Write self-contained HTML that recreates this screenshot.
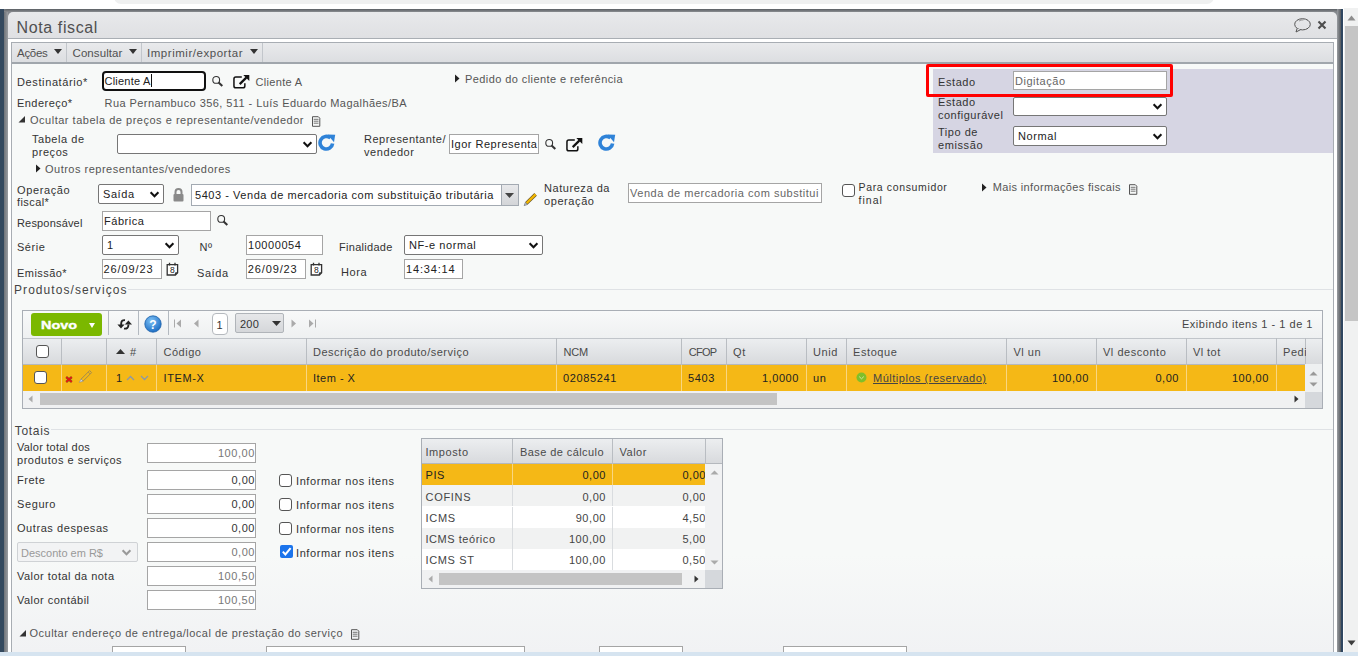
<!DOCTYPE html>
<html><head><meta charset="utf-8"><style>
html,body{margin:0;padding:0;}
body{width:1358px;height:656px;overflow:hidden;position:relative;background:#fff;font-family:"Liberation Sans", sans-serif;}
body>div{position:absolute;box-sizing:border-box;}
.t{white-space:pre;line-height:1;}
</style></head><body>
<div style="left:114px;top:-10px;width:1100px;height:14px;background:#eff0f0;border-radius:10px;"></div>
<div style="left:0px;top:9px;width:4px;height:643px;background:#34495e;"></div>
<div style="left:4px;top:9px;width:4px;height:643px;background:linear-gradient(90deg,#6f7378,#9a9da1);"></div>
<div style="left:4px;top:9px;width:1339px;height:3px;background:linear-gradient(#5a5e63,#8a8d91);border-radius:6px 6px 0 0;"></div>
<div style="left:1337px;top:9px;width:4px;height:643px;background:linear-gradient(90deg,#9a9da1,#55595e);"></div>
<div style="left:1341px;top:9px;width:2px;height:643px;background:#2f4660;"></div>
<div style="left:8px;top:12px;width:1329px;height:640px;background:#fff;"></div>
<div style="left:8px;top:12px;width:1329px;height:8px;background:#85898e;"></div>
<div style="left:8px;top:12px;width:1329px;height:27px;background:linear-gradient(#e8e9eb,#dfe0e3);border-bottom:1px solid #a9aeb4;border-radius:5px 5px 0 0;"></div>
<div class="t" style="left:16.5px;top:20.00px;font-size:16px;color:#505050;letter-spacing:0.618px;">Nota fiscal</div>
<svg style="position:absolute;left:1293px;top:17px;" width="20" height="16" viewBox="0 0 20 16"><ellipse cx="9.5" cy="7.3" rx="7.8" ry="5.6" fill="none" stroke="#555" stroke-width="1"/><path d="M4.2 11.2 L3 15 L7.5 12.7" fill="#e2e3e6" stroke="#555" stroke-width="1"/><path d="M6 4 Q8 2.8 10.5 2.9" stroke="#888" stroke-width="0.8" fill="none"/></svg>
<svg style="position:absolute;left:1317px;top:20px;" width="10" height="10" viewBox="0 0 10 10"><path d="M1.5 1.5 L8.5 8.5 M8.5 1.5 L1.5 8.5" stroke="#4d4d4d" stroke-width="2.1"/></svg>
<div style="left:1344px;top:8px;width:14px;height:644px;background:#f0f1f1;"></div>
<svg style="position:absolute;left:1347px;top:15px;" width="9" height="6" viewBox="0 0 9 6"><path d="M0.5 5.5 L4.5 0.5 L8.5 5.5Z" fill="#8d8d8d"/></svg>
<div style="left:1345px;top:26px;width:13px;height:295px;background:#c5c5c5;"></div>
<svg style="position:absolute;left:1347px;top:640px;" width="9" height="6" viewBox="0 0 9 6"><path d="M0.5 0.5 L4.5 5.5 L8.5 0.5Z" fill="#3d3d3d"/></svg>
<div style="left:0px;top:652px;width:1358px;height:4px;background:#d6e4f0;"></div>
<div style="left:11px;top:42px;width:1323px;height:610px;background:linear-gradient(#f7f9f8 0%,#f7f9f8 84%,#f1f2f4 100%);border:1px solid #a8adb3;border-bottom:none;"></div>
<div style="left:12px;top:43px;width:1321px;height:21px;background:linear-gradient(#e9eaec,#dcdee1);border-bottom:2px solid #a0a6ac;"></div>
<div style="left:66px;top:43px;width:1px;height:19px;background:#c2c6cb;"></div>
<div style="left:141px;top:43px;width:1px;height:19px;background:#c2c6cb;"></div>
<div style="left:262px;top:43px;width:1px;height:19px;background:#c2c6cb;"></div>
<div class="t" style="left:17px;top:48.00px;font-size:11.5px;color:#505050;letter-spacing:-0.294px;">Ações</div>
<div class="t" style="left:72.5px;top:48.00px;font-size:11.5px;color:#505050;letter-spacing:0.087px;">Consultar</div>
<div class="t" style="left:147px;top:48.00px;font-size:11.5px;color:#505050;letter-spacing:0.535px;">Imprimir/exportar</div>
<svg style="position:absolute;left:54px;top:48.5px;" width="8" height="5" viewBox="0 0 8 5"><path d="M0 0H8L4 5Z" fill="#333"/></svg>
<svg style="position:absolute;left:129px;top:48.5px;" width="8" height="5" viewBox="0 0 8 5"><path d="M0 0H8L4 5Z" fill="#333"/></svg>
<svg style="position:absolute;left:250px;top:48.5px;" width="8" height="5" viewBox="0 0 8 5"><path d="M0 0H8L4 5Z" fill="#333"/></svg>
<div class="t" style="left:17px;top:77.00px;font-size:11px;color:#333;letter-spacing:0.617px;">Destinatário*</div>
<div style="left:102px;top:71px;width:104px;height:20px;background:#fff;border:2.5px solid #111;border-radius:4px;"></div>
<div class="t" style="left:104.5px;top:76.00px;font-size:11px;color:#222;letter-spacing:0.219px;">Cliente A</div>
<div style="left:151px;top:74px;width:1px;height:13px;background:#111;"></div>
<svg style="position:absolute;left:211px;top:75px;" width="13" height="13" viewBox="0 0 13 13"><circle cx="5.2" cy="4.9" r="3.4" stroke="#333" stroke-width="1.1" fill="none"/><path d="M7.6 7.4 L11.3 10.9" stroke="#333" stroke-width="2.1"/></svg>
<svg style="position:absolute;left:232px;top:74px;" width="19" height="16" viewBox="0 0 19 16"><path d="M9.8 3.05 H3.8 Q1.95 3.05 1.95 4.9 V11.9 Q1.95 13.75 3.8 13.75 H11 Q12.85 13.75 12.85 11.9 V9.3" stroke="#111" stroke-width="1.5" fill="none"/><path d="M7.7 10.1 L14.3 3.6" stroke="#111" stroke-width="2.2"/><path d="M11.3 1 H17.3 V7Z" fill="#111"/></svg>
<div class="t" style="left:255.5px;top:77.00px;font-size:11px;color:#555;letter-spacing:0.330px;">Cliente A</div>
<svg style="position:absolute;left:455px;top:74px;" width="5" height="9" viewBox="0 0 5 9"><path d="M0 0.5 L4.5 4.5 L0 8.5Z" fill="#222"/></svg>
<div class="t" style="left:465px;top:74.00px;font-size:11px;color:#555;letter-spacing:0.415px;">Pedido do cliente e referência</div>
<div class="t" style="left:17px;top:98.00px;font-size:11px;color:#333;letter-spacing:0.458px;">Endereço*</div>
<div class="t" style="left:104.5px;top:98.00px;font-size:11px;color:#555;letter-spacing:0.432px;">Rua Pernambuco 356, 511 - Luís Eduardo Magalhães/BA</div>
<svg style="position:absolute;left:18.3px;top:116px;" width="8" height="7" viewBox="0 0 8 7"><path d="M7 0 V6.5 H0.5Z" fill="#333"/></svg>
<div class="t" style="left:30px;top:115.00px;font-size:11px;color:#555;letter-spacing:0.512px;">Ocultar tabela de preços e representante/vendedor</div>
<svg style="position:absolute;left:310.5px;top:115.5px;" width="10" height="11" viewBox="0 0 10 11"><path d="M1.5 0.7 H7.3 L8.8 2.2 V10.3 H1.5Z" fill="none" stroke="#555" stroke-width="1"/><path d="M2.7 3.3H7.5M2.7 5.2H7.5M2.7 7.2H7.5" stroke="#666" stroke-width="0.9"/></svg>
<div class="t" style="left:32px;top:134.00px;font-size:11px;color:#333;letter-spacing:0.539px;">Tabela de</div>
<div class="t" style="left:32px;top:147.00px;font-size:11px;color:#333;letter-spacing:0.560px;">preços</div>
<div style="left:117px;top:134px;width:200px;height:20px;background:#fff;border:1px solid #767676;border-radius:2px;"></div>
<svg style="position:absolute;left:302px;top:140.5px;" width="11" height="7" viewBox="0 0 11 7"><path d="M1.6 1.3 L5.5 5.2 L9.4 1.3" stroke="#111" stroke-width="2.1" fill="none"/></svg>
<svg style="position:absolute;left:318px;top:134px;" width="18" height="17" viewBox="0 0 18 17"><path d="M14.6 9.5 A6.3 6.3 0 1 1 12.5 4" stroke="#2f83d8" stroke-width="3.6" fill="none"/><path d="M9.5 0.5 L17.2 0.8 L16 8.2Z" fill="#2f83d8"/></svg>
<div class="t" style="left:364px;top:134.00px;font-size:11px;color:#333;letter-spacing:0.484px;">Representante/</div>
<div class="t" style="left:364px;top:147.00px;font-size:11px;color:#333;letter-spacing:0.584px;">vendedor</div>
<div style="left:449px;top:134px;width:90px;height:20px;background:#fff;border:1px solid #a5a5a5;"></div>
<div class="t" style="left:451px;top:139.00px;font-size:11px;color:#222;letter-spacing:0.507px;">Igor Representa</div>
<svg style="position:absolute;left:544px;top:138px;" width="13" height="13" viewBox="0 0 13 13"><circle cx="5.2" cy="4.9" r="3.4" stroke="#333" stroke-width="1.1" fill="none"/><path d="M7.6 7.4 L11.3 10.9" stroke="#333" stroke-width="2.1"/></svg>
<svg style="position:absolute;left:565px;top:137px;" width="19" height="16" viewBox="0 0 19 16"><path d="M9.8 3.05 H3.8 Q1.95 3.05 1.95 4.9 V11.9 Q1.95 13.75 3.8 13.75 H11 Q12.85 13.75 12.85 11.9 V9.3" stroke="#111" stroke-width="1.5" fill="none"/><path d="M7.7 10.1 L14.3 3.6" stroke="#111" stroke-width="2.2"/><path d="M11.3 1 H17.3 V7Z" fill="#111"/></svg>
<svg style="position:absolute;left:598px;top:134px;" width="18" height="17" viewBox="0 0 18 17"><path d="M14.6 9.5 A6.3 6.3 0 1 1 12.5 4" stroke="#2f83d8" stroke-width="3.6" fill="none"/><path d="M9.5 0.5 L17.2 0.8 L16 8.2Z" fill="#2f83d8"/></svg>
<div style="left:933px;top:69px;width:400px;height:84px;background:#d6d5e3;"></div>
<div style="left:926px;top:64px;width:247px;height:33px;border:3px solid #f00;border-radius:2px;"></div>
<div class="t" style="left:938px;top:77.00px;font-size:11px;color:#333;letter-spacing:0.580px;">Estado</div>
<div style="left:1013px;top:71px;width:154px;height:19px;background:#fff;border:1px solid #a5a5a5;"></div>
<div class="t" style="left:1015px;top:76.00px;font-size:11px;color:#666;letter-spacing:0.519px;">Digitação</div>
<div class="t" style="left:938px;top:97.00px;font-size:11px;color:#333;letter-spacing:0.580px;">Estado</div>
<div class="t" style="left:938px;top:110.00px;font-size:11px;color:#333;letter-spacing:0.503px;">configurável</div>
<div style="left:1013px;top:97px;width:154px;height:19px;background:#fff;border:1px solid #767676;border-radius:2px;"></div>
<svg style="position:absolute;left:1152px;top:103.0px;" width="11" height="7" viewBox="0 0 11 7"><path d="M1.6 1.3 L5.5 5.2 L9.4 1.3" stroke="#111" stroke-width="2.1" fill="none"/></svg>
<div class="t" style="left:938px;top:127.00px;font-size:11px;color:#333;letter-spacing:0.528px;">Tipo de</div>
<div class="t" style="left:938px;top:140.00px;font-size:11px;color:#333;letter-spacing:0.595px;">emissão</div>
<div style="left:1013px;top:126px;width:154px;height:20px;background:#fff;border:1px solid #767676;border-radius:2px;"></div>
<div class="t" style="left:1018px;top:131.00px;font-size:11px;color:#222;letter-spacing:0.601px;">Normal</div>
<svg style="position:absolute;left:1152px;top:132.5px;" width="11" height="7" viewBox="0 0 11 7"><path d="M1.6 1.3 L5.5 5.2 L9.4 1.3" stroke="#111" stroke-width="2.1" fill="none"/></svg>
<svg style="position:absolute;left:36px;top:164px;" width="5" height="9" viewBox="0 0 5 9"><path d="M0 0.5 L4.5 4.5 L0 8.5Z" fill="#222"/></svg>
<div class="t" style="left:45px;top:164.00px;font-size:11px;color:#555;letter-spacing:0.494px;">Outros representantes/vendedores</div>
<div class="t" style="left:17px;top:185.00px;font-size:11px;color:#333;letter-spacing:0.615px;">Operação</div>
<div class="t" style="left:17px;top:197.00px;font-size:11px;color:#333;letter-spacing:0.427px;">fiscal*</div>
<div style="left:98px;top:184px;width:66px;height:20px;background:#fff;border:1px solid #767676;border-radius:2px;"></div>
<div class="t" style="left:103px;top:189.00px;font-size:11px;color:#222;letter-spacing:0.585px;">Saída</div>
<svg style="position:absolute;left:149px;top:190.5px;" width="11" height="7" viewBox="0 0 11 7"><path d="M1.6 1.3 L5.5 5.2 L9.4 1.3" stroke="#111" stroke-width="2.1" fill="none"/></svg>
<svg style="position:absolute;left:172px;top:187px;" width="13" height="15" viewBox="0 0 13 15"><path d="M3.5 7 V5 A3 3 0 0 1 9.5 5 V7" stroke="#8a8a8a" stroke-width="2" fill="none"/><rect x="1.5" y="7" width="10" height="7.5" rx="1" fill="#8a8a8a"/></svg>
<div style="left:191px;top:184px;width:328px;height:22px;background:#fff;border:1px solid #a3aab2;"></div>
<div style="left:501px;top:185px;width:17px;height:20px;background:linear-gradient(#e8e9eb,#d3d5d8);border-left:1px solid #a3aab2;"></div>
<svg style="position:absolute;left:505px;top:193px;" width="9" height="5" viewBox="0 0 9 5"><path d="M0 0H9L4.5 5Z" fill="#444"/></svg>
<div class="t" style="left:195px;top:190.00px;font-size:11px;color:#222;letter-spacing:0.543px;">5403 - Venda de mercadoria com substituição tributária</div>
<svg style="position:absolute;left:523px;top:192px;" width="15" height="15" viewBox="0 0 15 15"><path d="M3.5 11.2 L12.6 2.4" stroke="#6b5a2a" stroke-width="3.6"/><path d="M3.5 11.2 L12.6 2.4" stroke="#f5b800" stroke-width="2.2"/><path d="M1.2 13.6 L2.4 10.4 L4.6 12.4Z" fill="#c8d4e0" stroke="#555" stroke-width="0.6"/></svg>
<div class="t" style="left:544px;top:183.00px;font-size:11px;color:#333;letter-spacing:0.554px;">Natureza da</div>
<div class="t" style="left:544px;top:196.00px;font-size:11px;color:#333;letter-spacing:0.584px;">operação</div>
<div style="left:628px;top:183px;width:194px;height:20px;background:#fff;border:1px solid #a5a5a5;"></div>
<div class="t" style="left:630px;top:188.00px;font-size:11px;color:#666;letter-spacing:0.520px;">Venda de mercadoria com substitui</div>
<svg style="position:absolute;left:842px;top:184px;" width="13" height="13" viewBox="0 0 13 13"><rect x="0.5" y="0.5" width="12" height="12" rx="2.5" fill="#fff" stroke="#555"/></svg>
<div class="t" style="left:858.5px;top:182.00px;font-size:10.5px;color:#333;letter-spacing:0.642px;">Para consumidor</div>
<div class="t" style="left:858.5px;top:195.00px;font-size:10.5px;color:#333;letter-spacing:1.047px;">final</div>
<svg style="position:absolute;left:982px;top:182.5px;" width="5" height="9" viewBox="0 0 5 9"><path d="M0 0.5 L4.5 4.5 L0 8.5Z" fill="#222"/></svg>
<div class="t" style="left:992.7px;top:182.00px;font-size:11px;color:#555;letter-spacing:0.353px;">Mais informações fiscais</div>
<svg style="position:absolute;left:1127.5px;top:183.5px;" width="10" height="11" viewBox="0 0 10 11"><path d="M1.5 0.7 H7.3 L8.8 2.2 V10.3 H1.5Z" fill="none" stroke="#555" stroke-width="1"/><path d="M2.7 3.3H7.5M2.7 5.2H7.5M2.7 7.2H7.5" stroke="#666" stroke-width="0.9"/></svg>
<div class="t" style="left:17px;top:218.00px;font-size:11px;color:#333;letter-spacing:0.173px;">Responsável</div>
<div style="left:102px;top:211px;width:109px;height:20px;background:#fff;border:1px solid #a5a5a5;"></div>
<div class="t" style="left:104px;top:216.00px;font-size:11px;color:#222;letter-spacing:0.533px;">Fábrica</div>
<svg style="position:absolute;left:216px;top:214px;" width="13" height="13" viewBox="0 0 13 13"><circle cx="5.2" cy="4.9" r="3.4" stroke="#333" stroke-width="1.1" fill="none"/><path d="M7.6 7.4 L11.3 10.9" stroke="#333" stroke-width="2.1"/></svg>
<div class="t" style="left:17px;top:242.00px;font-size:11px;color:#333;letter-spacing:0.522px;">Série</div>
<div style="left:102px;top:235px;width:77px;height:20px;background:#fff;border:1px solid #767676;border-radius:2px;"></div>
<div class="t" style="left:107px;top:240.00px;font-size:11px;color:#222;">1</div>
<svg style="position:absolute;left:164px;top:241.5px;" width="11" height="7" viewBox="0 0 11 7"><path d="M1.6 1.3 L5.5 5.2 L9.4 1.3" stroke="#111" stroke-width="2.1" fill="none"/></svg>
<div class="t" style="left:199.5px;top:242.00px;font-size:11px;color:#333;letter-spacing:0.612px;">Nº</div>
<div style="left:246px;top:235px;width:77px;height:20px;background:#fff;border:1px solid #a5a5a5;"></div>
<div class="t" style="left:248px;top:240.00px;font-size:11px;color:#222;letter-spacing:0.568px;">10000054</div>
<div class="t" style="left:339px;top:242.00px;font-size:11px;color:#333;letter-spacing:0.283px;">Finalidade</div>
<div style="left:404px;top:235px;width:139px;height:20px;background:#fff;border:1px solid #767676;border-radius:2px;"></div>
<div class="t" style="left:409px;top:240.00px;font-size:11px;color:#222;letter-spacing:0.566px;">NF-e normal</div>
<svg style="position:absolute;left:528px;top:241.5px;" width="11" height="7" viewBox="0 0 11 7"><path d="M1.6 1.3 L5.5 5.2 L9.4 1.3" stroke="#111" stroke-width="2.1" fill="none"/></svg>
<div class="t" style="left:17px;top:268.00px;font-size:11px;color:#333;letter-spacing:0.441px;">Emissão*</div>
<div style="left:102px;top:259px;width:60px;height:20px;background:#fff;border:1px solid #a5a5a5;"></div>
<div class="t" style="left:103.6px;top:264.00px;font-size:11px;color:#222;letter-spacing:0.871px;">26/09/23</div>
<svg style="position:absolute;left:166px;top:262px;" width="13" height="14" viewBox="0 0 13 14"><path d="M1.2 2.6 H11.6 V10.8 L9.4 13 H1.2Z" fill="#fff" stroke="#333" stroke-width="1.3"/><path d="M9.4 13 V10.8 H11.6" fill="none" stroke="#333" stroke-width="1"/><path d="M3.5 0.8V3.6M9 0.8V3.6" stroke="#333" stroke-width="1.3"/><text x="6.3" y="11.3" font-size="8.5" text-anchor="middle" fill="#222" font-family="Liberation Sans">8</text></svg>
<div class="t" style="left:197px;top:268.00px;font-size:11px;color:#333;letter-spacing:0.585px;">Saída</div>
<div style="left:246px;top:259px;width:60px;height:20px;background:#fff;border:1px solid #a5a5a5;"></div>
<div class="t" style="left:247.8px;top:264.00px;font-size:11px;color:#222;letter-spacing:0.871px;">26/09/23</div>
<svg style="position:absolute;left:310px;top:262px;" width="13" height="14" viewBox="0 0 13 14"><path d="M1.2 2.6 H11.6 V10.8 L9.4 13 H1.2Z" fill="#fff" stroke="#333" stroke-width="1.3"/><path d="M9.4 13 V10.8 H11.6" fill="none" stroke="#333" stroke-width="1"/><path d="M3.5 0.8V3.6M9 0.8V3.6" stroke="#333" stroke-width="1.3"/><text x="6.3" y="11.3" font-size="8.5" text-anchor="middle" fill="#222" font-family="Liberation Sans">8</text></svg>
<div class="t" style="left:341px;top:267.00px;font-size:11px;color:#333;letter-spacing:0.608px;">Hora</div>
<div style="left:404px;top:259px;width:59px;height:20px;background:#fff;border:1px solid #a5a5a5;"></div>
<div class="t" style="left:406px;top:264.00px;font-size:11px;color:#222;letter-spacing:0.834px;">14:34:14</div>
<div class="t" style="left:14px;top:284.00px;font-size:11.99px;color:#444;letter-spacing:1.074px;">Produtos/serviços</div>
<div style="left:128px;top:289px;width:1205px;height:1px;background:#dfe2e5;"></div>
<div style="left:22px;top:310px;width:1301px;height:99px;background:#f7f8f8;border:1px solid #a9aeb5;"></div>
<div style="left:23px;top:311px;width:1299px;height:27px;background:linear-gradient(#f8f9f9,#eef0f1);"></div>
<div style="left:31px;top:313px;width:71px;height:23px;background:#7bb800;border-radius:3px;"></div>
<div class="t" style="left:41px;top:319.00px;font-size:11.6px;color:#fff;font-weight:bold;-webkit-text-stroke:0.4px #fff;transform:scaleX(1.24);transform-origin:0 0;">Novo</div>
<svg style="position:absolute;left:89px;top:322.5px;" width="6" height="5" viewBox="0 0 6 5"><path d="M0 0H6L3 5Z" fill="#fff"/></svg>
<div style="left:108px;top:311px;width:1px;height:24px;background:#b3b9c0;"></div>
<div style="left:138px;top:311px;width:1px;height:24px;background:#b3b9c0;"></div>
<div style="left:168px;top:311px;width:1px;height:24px;background:#b3b9c0;"></div>
<svg style="position:absolute;left:116.5px;top:318.5px;" width="16" height="12" viewBox="0 0 16 12"><path d="M8 1.2 Q4.3 0.8 4.2 4.5 V6" stroke="#222" stroke-width="1.9" fill="none"/><path d="M0.4 5.5 H7.6 L4 9.5Z" fill="#222"/><path d="M7 9.6 Q11.4 10.2 11.4 6 V5.5" stroke="#222" stroke-width="1.9" fill="none"/><path d="M7.8 5.6 H15 L11.4 1.6Z" fill="#222"/></svg>
<svg style="position:absolute;left:144px;top:315px;" width="18" height="18" viewBox="0 0 18 18"><defs><radialGradient id="hg" cx="0.4" cy="0.3" r="0.7"><stop offset="0" stop-color="#7cc0f5"/><stop offset="1" stop-color="#1f6fc5"/></radialGradient></defs><circle cx="9" cy="9" r="8.2" fill="url(#hg)" stroke="#1b5fa8" stroke-width="0.8"/><text x="9" y="13.5" font-size="12" font-weight="bold" text-anchor="middle" fill="#fff" font-family="Liberation Sans">?</text></svg>
<svg style="position:absolute;left:174px;top:319px;" width="8" height="9" viewBox="0 0 8 9"><path d="M0.5 0.5V8.5" stroke="#aaa"/><path d="M7 0.5 L2.5 4.5 L7 8.5Z" fill="#aaa"/></svg>
<svg style="position:absolute;left:193px;top:319px;" width="6" height="9" viewBox="0 0 6 9"><path d="M5.5 0.5 L1 4.5 L5.5 8.5Z" fill="#aaa"/></svg>
<div style="left:212px;top:313px;width:16px;height:22px;background:#fff;border:1px solid #b5b9be;border-radius:4px;"></div>
<div class="t" style="left:216.5px;top:320.00px;font-size:11px;color:#333;">1</div>
<div style="left:235px;top:313px;width:49px;height:20px;background:linear-gradient(#e6e7e9,#d5d7da);border:1px solid #b0b4b9;border-radius:2px;"></div>
<div class="t" style="left:240px;top:319.00px;font-size:11px;color:#333;letter-spacing:0.214px;">200</div>
<svg style="position:absolute;left:272px;top:321px;" width="9" height="5" viewBox="0 0 9 5"><path d="M0 0H9L4.5 5Z" fill="#333"/></svg>
<svg style="position:absolute;left:291px;top:319px;" width="6" height="9" viewBox="0 0 6 9"><path d="M0.5 0.5 L5 4.5 L0.5 8.5Z" fill="#aaa"/></svg>
<svg style="position:absolute;left:308px;top:319px;" width="8" height="9" viewBox="0 0 8 9"><path d="M1 0.5 L5.5 4.5 L1 8.5Z" fill="#aaa"/><path d="M7.5 0.5V8.5" stroke="#aaa"/></svg>
<div class="t" style="left:1182px;top:319.00px;font-size:11px;color:#444;letter-spacing:0.519px;">Exibindo itens 1 - 1 de 1</div>
<div style="left:23px;top:338px;width:1299px;height:27px;background:linear-gradient(#eceef0,#d8dadd);border-top:1px solid #c1c5ca;border-bottom:1px solid #b4b8bd;"></div>
<div style="left:61px;top:338px;width:1px;height:27px;background:#b9bdc2;"></div>
<div style="left:106px;top:338px;width:1px;height:27px;background:#b9bdc2;"></div>
<div style="left:156px;top:338px;width:1px;height:27px;background:#b9bdc2;"></div>
<div style="left:306px;top:338px;width:1px;height:27px;background:#b9bdc2;"></div>
<div style="left:556px;top:338px;width:1px;height:27px;background:#b9bdc2;"></div>
<div style="left:681px;top:338px;width:1px;height:27px;background:#b9bdc2;"></div>
<div style="left:726px;top:338px;width:1px;height:27px;background:#b9bdc2;"></div>
<div style="left:806px;top:338px;width:1px;height:27px;background:#b9bdc2;"></div>
<div style="left:846px;top:338px;width:1px;height:27px;background:#b9bdc2;"></div>
<div style="left:1006px;top:338px;width:1px;height:27px;background:#b9bdc2;"></div>
<div style="left:1096px;top:338px;width:1px;height:27px;background:#b9bdc2;"></div>
<div style="left:1186px;top:338px;width:1px;height:27px;background:#b9bdc2;"></div>
<div style="left:1276px;top:338px;width:1px;height:27px;background:#b9bdc2;"></div>
<div style="left:1305px;top:338px;width:1px;height:27px;background:#b9bdc2;"></div>
<svg style="position:absolute;left:36px;top:345px;" width="13" height="13" viewBox="0 0 13 13"><rect x="0.5" y="0.5" width="12" height="12" rx="2.5" fill="#fff" stroke="#555"/></svg>
<svg style="position:absolute;left:116px;top:349px;" width="9" height="5" viewBox="0 0 9 5"><path d="M0 5H9L4.5 0Z" fill="#333"/></svg>
<div class="t" style="left:130px;top:347.00px;font-size:11px;color:#4a4a4a;">#</div>
<div class="t" style="left:163.5px;top:347.00px;font-size:11px;color:#4a4a4a;letter-spacing:0.523px;">Código</div>
<div class="t" style="left:313px;top:347.00px;font-size:11px;color:#4a4a4a;letter-spacing:0.483px;">Descrição do produto/serviço</div>
<div class="t" style="left:563.4px;top:347.00px;font-size:11px;color:#4a4a4a;letter-spacing:-0.188px;">NCM</div>
<div class="t" style="left:688.8px;top:347.00px;font-size:11px;color:#4a4a4a;letter-spacing:-0.766px;">CFOP</div>
<div class="t" style="left:733px;top:347.00px;font-size:11px;color:#4a4a4a;letter-spacing:0.587px;">Qt</div>
<div class="t" style="left:813px;top:347.00px;font-size:11px;color:#4a4a4a;letter-spacing:0.577px;">Unid</div>
<div class="t" style="left:853px;top:347.00px;font-size:11px;color:#4a4a4a;letter-spacing:0.587px;">Estoque</div>
<div class="t" style="left:1013.5px;top:347.00px;font-size:11px;color:#4a4a4a;letter-spacing:0.511px;">Vl un</div>
<div class="t" style="left:1103px;top:347.00px;font-size:11px;color:#4a4a4a;letter-spacing:0.533px;">Vl desconto</div>
<div class="t" style="left:1193px;top:347.00px;font-size:11px;color:#4a4a4a;letter-spacing:0.426px;">Vl tot</div>
<div class="t" style="left:1283px;top:347.00px;font-size:11px;color:#4a4a4a;width:22.5px;overflow:hidden;letter-spacing:0.560px;">Pedi</div>
<div style="left:23px;top:365px;width:1282px;height:26px;background:#f5b816;"></div>
<div style="left:61px;top:365px;width:1px;height:26px;background:#f9d681;"></div>
<div style="left:106px;top:365px;width:1px;height:26px;background:#f9d681;"></div>
<div style="left:156px;top:365px;width:1px;height:26px;background:#f9d681;"></div>
<div style="left:306px;top:365px;width:1px;height:26px;background:#f9d681;"></div>
<div style="left:556px;top:365px;width:1px;height:26px;background:#f9d681;"></div>
<div style="left:681px;top:365px;width:1px;height:26px;background:#f9d681;"></div>
<div style="left:726px;top:365px;width:1px;height:26px;background:#f9d681;"></div>
<div style="left:806px;top:365px;width:1px;height:26px;background:#f9d681;"></div>
<div style="left:846px;top:365px;width:1px;height:26px;background:#f9d681;"></div>
<div style="left:1006px;top:365px;width:1px;height:26px;background:#f9d681;"></div>
<div style="left:1096px;top:365px;width:1px;height:26px;background:#f9d681;"></div>
<div style="left:1186px;top:365px;width:1px;height:26px;background:#f9d681;"></div>
<div style="left:1276px;top:365px;width:1px;height:26px;background:#f9d681;"></div>
<svg style="position:absolute;left:34px;top:371px;" width="13" height="13" viewBox="0 0 13 13"><rect x="0.5" y="0.5" width="12" height="12" rx="2.5" fill="#fff" stroke="#555"/></svg>
<svg style="position:absolute;left:64.5px;top:375.5px;" width="8" height="7" viewBox="0 0 8 7"><path d="M1.2 1 L6.8 6 M6.8 1 L1.2 6" stroke="#8a5a20" stroke-width="2.4"/><path d="M1.2 1 L6.8 6 M6.8 1 L1.2 6" stroke="#f01010" stroke-width="1.3"/></svg>
<svg style="position:absolute;left:78px;top:368px;" width="15" height="15" viewBox="0 0 15 15"><path d="M3 11.2 L11.6 2.6 L13.6 4.6 L5 13.2Z" fill="none" stroke="#9b8655" stroke-width="0.9"/><path d="M10.2 4 L12.2 6" stroke="#9b8655" stroke-width="0.8"/><path d="M3 11.2 L1.3 14.3 L5 13.2Z" fill="#dfe6f0" stroke="#8a8a8a" stroke-width="0.6"/></svg>
<div class="t" style="left:116px;top:373.00px;font-size:11px;color:#222;">1</div>
<svg style="position:absolute;left:126px;top:375px;" width="9" height="6" viewBox="0 0 9 6"><path d="M1 5 L4.5 1.5 L8 5" stroke="#8b98a8" stroke-width="1.3" fill="none"/></svg>
<svg style="position:absolute;left:140px;top:375px;" width="9" height="6" viewBox="0 0 9 6"><path d="M1 1 L4.5 4.5 L8 1" stroke="#8b98a8" stroke-width="1.3" fill="none"/></svg>
<div class="t" style="left:163.5px;top:373.00px;font-size:11px;color:#222;letter-spacing:0.633px;">ITEM-X</div>
<div class="t" style="left:313px;top:373.00px;font-size:11px;color:#222;letter-spacing:0.490px;">Item - X</div>
<div class="t" style="left:563px;top:373.00px;font-size:11px;color:#222;letter-spacing:0.621px;">02085241</div>
<div class="t" style="left:688px;top:373.00px;font-size:11px;color:#222;letter-spacing:0.621px;">5403</div>
<div class="t" style="left:399px;width:400px;text-align:right;top:373.00px;font-size:11px;color:#222;letter-spacing:0.569px;">1,0000</div>
<div class="t" style="left:813px;top:373.00px;font-size:11px;color:#222;letter-spacing:0.621px;">un</div>
<svg style="position:absolute;left:856px;top:372px;" width="11" height="11" viewBox="0 0 11 11"><circle cx="5.5" cy="5.5" r="5" fill="#7fbf2a"/><path d="M3.2 4.6 L5.5 6.8 L7.8 4.6" stroke="#cfe9a6" stroke-width="1" fill="none"/></svg>
<div class="t" style="left:873px;top:373.00px;font-size:11px;color:#444;text-decoration:underline;letter-spacing:0.514px;">Múltiplos (reservado)</div>
<div class="t" style="left:689px;width:400px;text-align:right;top:373.00px;font-size:11px;color:#222;letter-spacing:0.569px;">100,00</div>
<div class="t" style="left:779px;width:400px;text-align:right;top:373.00px;font-size:11px;color:#222;letter-spacing:0.543px;">0,00</div>
<div class="t" style="left:869px;width:400px;text-align:right;top:373.00px;font-size:11px;color:#222;letter-spacing:0.569px;">100,00</div>
<div style="left:1305px;top:364px;width:17px;height:44px;background:#eef0f1;"></div>
<svg style="position:absolute;left:1309px;top:371px;" width="9" height="5" viewBox="0 0 9 5"><path d="M0.5 4.5 L4.5 0.5 L8.5 4.5Z" fill="#999"/></svg>
<svg style="position:absolute;left:1309px;top:382px;" width="9" height="5" viewBox="0 0 9 5"><path d="M0.5 0.5 L4.5 4.5 L8.5 0.5Z" fill="#999"/></svg>
<div style="left:1305px;top:392px;width:17px;height:16px;background:#d5d8dc;"></div>
<div style="left:23px;top:391px;width:1282px;height:17px;background:#f0f1f2;"></div>
<svg style="position:absolute;left:28px;top:395px;" width="5" height="8" viewBox="0 0 5 8"><path d="M4.5 0.5 L0.5 4 L4.5 7.5Z" fill="#aaa"/></svg>
<div style="left:40px;top:393px;width:737px;height:12px;background:#c4c4c4;"></div>
<svg style="position:absolute;left:1294px;top:395px;" width="5" height="8" viewBox="0 0 5 8"><path d="M0.5 0.5 L4.5 4 L0.5 7.5Z" fill="#333"/></svg>
<div class="t" style="left:14.7px;top:425.00px;font-size:11.99px;color:#444;letter-spacing:0.715px;">Totais</div>
<div style="left:51px;top:429px;width:1282px;height:1px;background:#dfe2e5;"></div>
<div class="t" style="left:17px;top:442.00px;font-size:11px;color:#333;letter-spacing:0.232px;">Valor total dos</div>
<div class="t" style="left:17px;top:455.00px;font-size:11px;color:#333;letter-spacing:0.511px;">produtos e serviços</div>
<div style="left:147px;top:443px;width:109px;height:20px;background:#fff;border:1px solid #a5a5a5;"></div>
<div class="t" style="left:-145px;width:400px;text-align:right;top:448.00px;font-size:11px;color:#777;letter-spacing:0.569px;">100,00</div>
<div class="t" style="left:17px;top:475.00px;font-size:11px;color:#333;letter-spacing:0.522px;">Frete</div>
<div style="left:147px;top:470px;width:109px;height:20px;background:#fff;border:1px solid #a5a5a5;"></div>
<div class="t" style="left:-145px;width:400px;text-align:right;top:475.00px;font-size:11px;color:#333;letter-spacing:0.543px;">0,00</div>
<svg style="position:absolute;left:279.3px;top:473.5px;" width="13" height="13" viewBox="0 0 13 13"><rect x="0.5" y="0.5" width="12" height="12" rx="2.5" fill="#fff" stroke="#555"/></svg>
<div class="t" style="left:296px;top:476.00px;font-size:11px;color:#333;letter-spacing:0.581px;">Informar nos itens</div>
<div class="t" style="left:17px;top:499.00px;font-size:11px;color:#333;letter-spacing:0.601px;">Seguro</div>
<div style="left:147px;top:494px;width:109px;height:20px;background:#fff;border:1px solid #a5a5a5;"></div>
<div class="t" style="left:-145px;width:400px;text-align:right;top:499.00px;font-size:11px;color:#333;letter-spacing:0.543px;">0,00</div>
<svg style="position:absolute;left:279.3px;top:497.5px;" width="13" height="13" viewBox="0 0 13 13"><rect x="0.5" y="0.5" width="12" height="12" rx="2.5" fill="#fff" stroke="#555"/></svg>
<div class="t" style="left:296px;top:500.00px;font-size:11px;color:#333;letter-spacing:0.581px;">Informar nos itens</div>
<div class="t" style="left:17px;top:523.00px;font-size:11px;color:#333;letter-spacing:0.565px;">Outras despesas</div>
<div style="left:147px;top:518px;width:109px;height:20px;background:#fff;border:1px solid #a5a5a5;"></div>
<div class="t" style="left:-145px;width:400px;text-align:right;top:523.00px;font-size:11px;color:#333;letter-spacing:0.543px;">0,00</div>
<svg style="position:absolute;left:279.3px;top:521.5px;" width="13" height="13" viewBox="0 0 13 13"><rect x="0.5" y="0.5" width="12" height="12" rx="2.5" fill="#fff" stroke="#555"/></svg>
<div class="t" style="left:296px;top:524.00px;font-size:11px;color:#333;letter-spacing:0.581px;">Informar nos itens</div>
<div style="left:17px;top:542px;width:121px;height:20px;background:#f2f3f4;border:1px solid #cfd2d5;border-radius:2px;"></div>
<div class="t" style="left:21px;top:548.00px;font-size:11px;color:#999;letter-spacing:0.004px;">Desconto em R$</div>
<svg style="position:absolute;left:121px;top:549px;" width="11" height="7" viewBox="0 0 11 7"><path d="M1.6 1.3 L5.5 5.2 L9.4 1.3" stroke="#999" stroke-width="2.1" fill="none"/></svg>
<div style="left:147px;top:542px;width:109px;height:20px;background:#fff;border:1px solid #a5a5a5;"></div>
<div class="t" style="left:-145px;width:400px;text-align:right;top:547.00px;font-size:11px;color:#777;letter-spacing:0.543px;">0,00</div>
<svg style="position:absolute;left:280px;top:545px;" width="13" height="13" viewBox="0 0 13 13"><rect x="0" y="0" width="13" height="13" rx="2" fill="#1b74ec"/><path d="M2.8 6.6 L5.4 9.4 L10.6 3.2" stroke="#fff" stroke-width="2" fill="none"/></svg>
<div class="t" style="left:296px;top:548.00px;font-size:11px;color:#333;letter-spacing:0.581px;">Informar nos itens</div>
<div class="t" style="left:17px;top:571.00px;font-size:11px;color:#333;letter-spacing:0.474px;">Valor total da nota</div>
<div style="left:147px;top:566px;width:109px;height:20px;background:#fff;border:1px solid #a5a5a5;"></div>
<div class="t" style="left:-145px;width:400px;text-align:right;top:571.00px;font-size:11px;color:#777;letter-spacing:0.569px;">100,50</div>
<div class="t" style="left:17px;top:595.00px;font-size:11px;color:#333;letter-spacing:0.479px;">Valor contábil</div>
<div style="left:147px;top:590px;width:109px;height:20px;background:#fff;border:1px solid #a5a5a5;"></div>
<div class="t" style="left:-145px;width:400px;text-align:right;top:595.00px;font-size:11px;color:#777;letter-spacing:0.569px;">100,50</div>
<div style="left:421px;top:438px;width:302px;height:151px;background:#fff;border:1px solid #a9aeb5;"></div>
<div style="left:422px;top:439px;width:300px;height:25px;background:linear-gradient(#eceef0,#d8dadd);border-bottom:1px solid #b4b8bd;"></div>
<div style="left:512px;top:439px;width:1px;height:25px;background:#b9bdc2;"></div>
<div style="left:612px;top:439px;width:1px;height:25px;background:#b9bdc2;"></div>
<div style="left:705px;top:439px;width:1px;height:25px;background:#b9bdc2;"></div>
<div class="t" style="left:425.5px;top:447.00px;font-size:11px;color:#4a4a4a;letter-spacing:0.568px;">Imposto</div>
<div class="t" style="left:520px;top:447.00px;font-size:11px;color:#4a4a4a;letter-spacing:0.422px;">Base de cálculo</div>
<div class="t" style="left:619.5px;top:447.00px;font-size:11px;color:#4a4a4a;letter-spacing:0.504px;">Valor</div>
<div style="left:422px;top:464px;width:283px;height:21px;background:#f5b816;"></div>
<div style="left:512px;top:464px;width:1px;height:21px;background:#f9d681;"></div>
<div style="left:612px;top:464px;width:1px;height:21px;background:#f9d681;"></div>
<div class="t" style="left:425.5px;top:470.00px;font-size:11px;color:#222;letter-spacing:0.601px;">PIS</div>
<div class="t" style="left:206px;width:400px;text-align:right;top:470.00px;font-size:11px;color:#222;letter-spacing:0.543px;">0,00</div>
<div class="t" style="left:306px;width:400px;text-align:right;top:470.00px;font-size:11px;color:#222;letter-spacing:0.543px;">0,00</div>
<div style="left:422px;top:485.3px;width:283px;height:21px;background:#f1f2f2;"></div>
<div style="left:512px;top:485.3px;width:1px;height:21px;background:#d9dcdf;"></div>
<div style="left:612px;top:485.3px;width:1px;height:21px;background:#d9dcdf;"></div>
<div class="t" style="left:425.5px;top:492.00px;font-size:11px;color:#444;letter-spacing:0.706px;">COFINS</div>
<div class="t" style="left:206px;width:400px;text-align:right;top:492.00px;font-size:11px;color:#444;letter-spacing:0.543px;">0,00</div>
<div class="t" style="left:306px;width:400px;text-align:right;top:492.00px;font-size:11px;color:#444;letter-spacing:0.543px;">0,00</div>
<div style="left:422px;top:506.6px;width:283px;height:21px;background:#fff;"></div>
<div style="left:512px;top:506.6px;width:1px;height:21px;background:#d9dcdf;"></div>
<div style="left:612px;top:506.6px;width:1px;height:21px;background:#d9dcdf;"></div>
<div class="t" style="left:425.5px;top:513.00px;font-size:11px;color:#444;letter-spacing:0.700px;">ICMS</div>
<div class="t" style="left:206px;width:400px;text-align:right;top:513.00px;font-size:11px;color:#444;letter-spacing:0.560px;">90,00</div>
<div class="t" style="left:306px;width:400px;text-align:right;top:513.00px;font-size:11px;color:#444;letter-spacing:0.543px;">4,50</div>
<div style="left:422px;top:527.9px;width:283px;height:21px;background:#f1f2f2;"></div>
<div style="left:512px;top:527.9px;width:1px;height:21px;background:#d9dcdf;"></div>
<div style="left:612px;top:527.9px;width:1px;height:21px;background:#d9dcdf;"></div>
<div class="t" style="left:425.5px;top:534.00px;font-size:11px;color:#444;letter-spacing:0.540px;">ICMS teórico</div>
<div class="t" style="left:206px;width:400px;text-align:right;top:534.00px;font-size:11px;color:#444;letter-spacing:0.569px;">100,00</div>
<div class="t" style="left:306px;width:400px;text-align:right;top:534.00px;font-size:11px;color:#444;letter-spacing:0.543px;">5,00</div>
<div style="left:422px;top:549.1999999999999px;width:283px;height:21px;background:#fff;"></div>
<div style="left:512px;top:549.1999999999999px;width:1px;height:21px;background:#d9dcdf;"></div>
<div style="left:612px;top:549.1999999999999px;width:1px;height:21px;background:#d9dcdf;"></div>
<div class="t" style="left:425.5px;top:555.00px;font-size:11px;color:#444;letter-spacing:0.648px;">ICMS ST</div>
<div class="t" style="left:206px;width:400px;text-align:right;top:555.00px;font-size:11px;color:#444;letter-spacing:0.569px;">100,00</div>
<div class="t" style="left:306px;width:400px;text-align:right;top:555.00px;font-size:11px;color:#444;letter-spacing:0.543px;">0,50</div>
<div style="left:705px;top:464px;width:17px;height:124px;background:#f1f2f3;"></div>
<svg style="position:absolute;left:710px;top:470px;" width="9" height="5" viewBox="0 0 9 5"><path d="M0.5 4.5 L4.5 0.5 L8.5 4.5Z" fill="#aaa"/></svg>
<svg style="position:absolute;left:710px;top:560px;" width="9" height="5" viewBox="0 0 9 5"><path d="M0.5 0.5 L4.5 4.5 L8.5 0.5Z" fill="#aaa"/></svg>
<div style="left:422px;top:570px;width:283px;height:18px;background:#f0f1f2;"></div>
<svg style="position:absolute;left:428px;top:575px;" width="5" height="8" viewBox="0 0 5 8"><path d="M4.5 0.5 L0.5 4 L4.5 7.5Z" fill="#aaa"/></svg>
<div style="left:439px;top:573px;width:243px;height:12px;background:#c4c4c4;"></div>
<svg style="position:absolute;left:694px;top:575px;" width="5" height="8" viewBox="0 0 5 8"><path d="M0.5 0.5 L4.5 4 L0.5 7.5Z" fill="#333"/></svg>
<div style="left:705px;top:570px;width:17px;height:18px;background:#d5d8dc;"></div>
<svg style="position:absolute;left:18.5px;top:629.5px;" width="8" height="7" viewBox="0 0 8 7"><path d="M7 0 V6.5 H0.5Z" fill="#333"/></svg>
<div class="t" style="left:29.5px;top:628.00px;font-size:11px;color:#555;letter-spacing:0.490px;">Ocultar endereço de entrega/local de prestação do serviço</div>
<svg style="position:absolute;left:350px;top:629px;" width="10" height="11" viewBox="0 0 10 11"><path d="M1.5 0.7 H7.3 L8.8 2.2 V10.3 H1.5Z" fill="none" stroke="#555" stroke-width="1"/><path d="M2.7 3.3H7.5M2.7 5.2H7.5M2.7 7.2H7.5" stroke="#666" stroke-width="0.9"/></svg>
<div style="left:112px;top:646px;width:74px;height:10px;background:#fff;border:1px solid #a5a5a5;"></div>
<div style="left:266px;top:646px;width:259px;height:10px;background:#fff;border:1px solid #a5a5a5;"></div>
<div style="left:599px;top:646px;width:84px;height:10px;background:#fff;border:1px solid #a5a5a5;"></div>
<div style="left:783px;top:646px;width:124px;height:10px;background:#fff;border:1px solid #a5a5a5;"></div>
<div style="left:0px;top:652px;width:1358px;height:4px;background:#d6e4f0;"></div>
</body></html>
